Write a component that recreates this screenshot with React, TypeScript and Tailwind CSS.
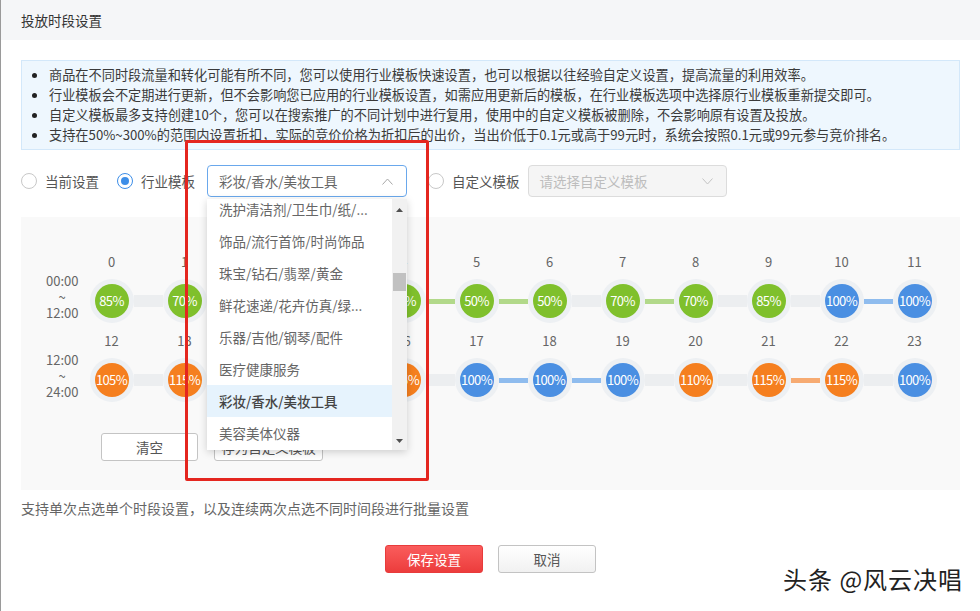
import React from 'react';

const row1 = [85, 70, 50, 50, 50, 50, 50, 70, 70, 85, 100, 100];
const row2 = [105, 115, 115, 115, 115, 100, 100, 100, 110, 115, 115, 100];

const circleCls = (v: number) =>
  v < 100 ? 'bg-[#7fc02c]' : v === 100 ? 'bg-[#4a8fe2]' : 'bg-[#f57f1f]';
const lineCls = (v: number) =>
  v < 100 ? 'bg-[#b2d98a]' : v === 100 ? 'bg-[#8fbcee]' : 'bg-[#f7ab72]';

function Circle({ v }: { v: number }) {
  return (
    <div className="flex h-[44px] w-[44px] shrink-0 items-center justify-center rounded-full bg-[#edf0f3]">
      <div
        className={`flex h-[34px] w-[34px] items-center justify-center rounded-full text-[13px] tracking-[-0.6px] text-white ${circleCls(v)}`}
      >
        {v}%
      </div>
    </div>
  );
}

function Connector({ a, b }: { a: number; b: number }) {
  if (a === b) return <div className={`h-[5px] w-[29px] shrink-0 ${lineCls(a)}`} />;
  return <div className="h-[12px] w-[29px] shrink-0 bg-[#eceef0]" />;
}

function HourRow({ start, values, from, to }: { start: number; values: number[]; from: string; to: string }) {
  return (
    <div className="flex">
      <div className="w-[54px] shrink-0 pl-[25px] pt-[20px]">
        <div className="w-[32px] text-center text-[13px] leading-[16px] text-[#666]">
          <div>{from}</div>
          <div>~</div>
          <div>{to}</div>
        </div>
      </div>
      <div>
        <div className="flex h-[18px] items-center text-[13px] leading-[18px] text-[#666]">
          {values.map((_, i) => (
            <div key={i} className="w-[73px] text-center">
              {start + i}
            </div>
          ))}
        </div>
        <div className="mt-[8px] flex items-center pl-[14.5px]">
          {values.map((v, i) => (
            <React.Fragment key={i}>
              <Circle v={v} />
              {i < values.length - 1 && <Connector a={v} b={values[i + 1]} />}
            </React.Fragment>
          ))}
        </div>
      </div>
    </div>
  );
}

const infoLines = [
  '商品在不同时段流量和转化可能有所不同，您可以使用行业模板快速设置，也可以根据以往经验自定义设置，提高流量的利用效率。',
  '行业模板会不定期进行更新，但不会影响您已应用的行业模板设置，如需应用更新后的模板，在行业模板选项中选择原行业模板重新提交即可。',
  '自定义模板最多支持创建10个，您可以在搜索推广的不同计划中进行复用，使用中的自定义模板被删除，不会影响原有设置及投放。',
  '支持在50%~300%的范围内设置折扣，实际的竞价价格为折扣后的出价，当出价低于0.1元或高于99元时，系统会按照0.1元或99元参与竞价排名。',
];

const items = [
  '洗护清洁剂/卫生巾/纸/...',
  '饰品/流行首饰/时尚饰品',
  '珠宝/钻石/翡翠/黄金',
  '鲜花速递/花卉仿真/绿...',
  '乐器/吉他/钢琴/配件',
  '医疗健康服务',
  '彩妆/香水/美妆工具',
  '美容美体仪器',
];

export default function App() {
  return (
    <div className="relative h-[611px] w-[980px] overflow-hidden border-l border-[#9a9a9a] bg-white font-['Noto_Sans_CJK_SC','Noto_Sans',sans-serif] text-[#333]">
      {/* header */}
      <div className="flex h-[40px] items-center bg-[#f5f6f8] pl-[20px] text-[13.5px] text-[#333]">投放时段设置</div>

      {/* info box */}
      <div className="mx-[20px] mt-[20px] border border-[#d3e8fa] bg-[#eef7fe] pb-[4px] pl-[10px] pt-[4px]">
        {infoLines.map((t, i) => (
          <div key={i} className="flex items-center text-[13.2px] leading-[20px] text-[#3a3a3a]">
            <span className="mr-[12px] h-[5px] w-[5px] shrink-0 rounded-full bg-[#222]" />
            <span className="whitespace-nowrap">{t}</span>
          </div>
        ))}
      </div>

      {/* radio row */}
      <div className="mt-[15px] flex h-[32px] items-center pl-[20px] text-[13.5px] text-[#555]">
        <span className="h-[16px] w-[16px] shrink-0 rounded-full border border-[#c8c8c8] bg-white" />
        <span className="ml-[8px]">当前设置</span>
        <span className="ml-[18px] flex h-[16px] w-[16px] shrink-0 items-center justify-center rounded-full border border-[#3d8ee8] bg-white">
          <span className="h-[8px] w-[8px] rounded-full bg-[#3d8ee8]" />
        </span>
        <span className="ml-[8px]">行业模板</span>
        <div className="relative ml-[12px]">
          <div className="flex h-[32px] w-[200px] items-center justify-between rounded-[4px] border border-[#6aa8ec] bg-white pl-[11px] pr-[13px] text-[#666]">
            <span>彩妆/香水/美妆工具</span>
            <svg width="11" height="7" viewBox="0 0 11 7">
              <polyline points="0.5,6.5 5.5,1 10.5,6.5" fill="none" stroke="#a8a8a8" strokeWidth="1" />
            </svg>
          </div>
          {/* dropdown */}
          <div className="absolute left-0 top-[34px] z-20 flex h-[251px] w-[200px] overflow-hidden bg-white shadow-[0_2px_8px_rgba(0,0,0,0.18)]">
            <div className="flex-1 overflow-hidden">
              <div className="-mt-[6px]">
                {items.map((t, i) => (
                  <div
                    key={i}
                    className={
                      i === 6
                        ? 'flex h-[32px] items-center whitespace-nowrap bg-[#e6f3fd] pl-[12px] text-[13.5px] font-medium text-[#444]'
                        : 'flex h-[32px] items-center whitespace-nowrap pl-[12px] text-[13.5px] text-[#666]'
                    }
                  >
                    {t}
                  </div>
                ))}
              </div>
            </div>
            <div className="flex w-[15px] flex-col items-center bg-[#f1f1f1]">
              <div className="flex h-[17px] items-center justify-center pt-[4px]">
                <svg width="7" height="4" viewBox="0 0 7 4">
                  <path d="M0 4 L3.5 0 L7 4Z" fill="#505050" />
                </svg>
              </div>
              <div className="mt-[57px] h-[18px] w-[13px] bg-[#c1c1c1]" />
              <div className="flex-1" />
              <div className="flex h-[17px] items-center justify-center pb-[2px]">
                <svg width="7" height="4" viewBox="0 0 7 4">
                  <path d="M0 0 L3.5 4 L7 0Z" fill="#505050" />
                </svg>
              </div>
            </div>
          </div>
        </div>
        <span className="ml-[21px] h-[16px] w-[16px] shrink-0 rounded-full border border-[#c8c8c8] bg-white" />
        <span className="ml-[8px]">自定义模板</span>
        <div className="ml-[8px] flex h-[32px] w-[199px] items-center justify-between rounded-[4px] border border-[#dcdcdc] bg-[#f5f5f5] pl-[11px] pr-[13px] text-[#bdbdbd]">
          <span>请选择自定义模板</span>
          <svg width="11" height="7" viewBox="0 0 11 7">
            <polyline points="0.5,0.5 5.5,6 10.5,0.5" fill="none" stroke="#c4c4c4" strokeWidth="1" />
          </svg>
        </div>
      </div>

      {/* hours panel */}
      <div className="mx-[20px] mt-[20px] h-[273px] bg-[#f9f9f9] pt-[36px]">
        <HourRow start={0} values={row1} from="00:00" to="12:00" />
        <div className="mt-[9px]">
          <HourRow start={12} values={row2} from="12:00" to="24:00" />
        </div>
        <div className="mt-[31px] flex gap-[16px] pl-[80px] text-[13.5px] text-[#555]">
          <div className="flex h-[28px] w-[97px] items-center justify-center rounded-[3px] border border-[#c4c4c4] bg-white">清空</div>
          <div className="flex h-[28px] w-[109px] items-center justify-center rounded-[3px] border border-[#c4c4c4] bg-white">存为自定义模板</div>
        </div>
      </div>

      <div className="ml-[20px] mt-[9px] text-[14px] leading-[18px] text-[#666]">
        支持单次点选单个时段设置，以及连续两次点选不同时间段进行批量设置
      </div>

      <div className="mt-[28px] flex justify-center gap-[15px] text-[13.5px]">
        <div className="flex h-[28px] w-[98px] items-center justify-center rounded-[3px] border border-[#e83b3b] bg-gradient-to-b from-[#fa5c5c] to-[#ec3c3c] text-white">
          保存设置
        </div>
        <div className="flex h-[28px] w-[98px] items-center justify-center rounded-[3px] border border-[#c3c3c3] bg-gradient-to-b from-white to-[#f1f1f1] text-[#555]">
          取消
        </div>
      </div>

      {/* annotation box */}
      <div className="pointer-events-none absolute left-[184px] top-[140px] z-30 h-[341px] w-[244px] rounded-[2px] border-[3px] border-[#e4261f]" />

      {/* watermark */}
      <div className="absolute left-[782px] top-[565px] z-30 whitespace-nowrap text-[24px] leading-[28px] tracking-[1px] text-[#222] [text-shadow:-1px_-1px_0_#fff,1px_-1px_0_#fff,-1px_1px_0_#fff,1px_1px_0_#fff]">
        头条 @风云决唱
      </div>
    </div>
  );
}
